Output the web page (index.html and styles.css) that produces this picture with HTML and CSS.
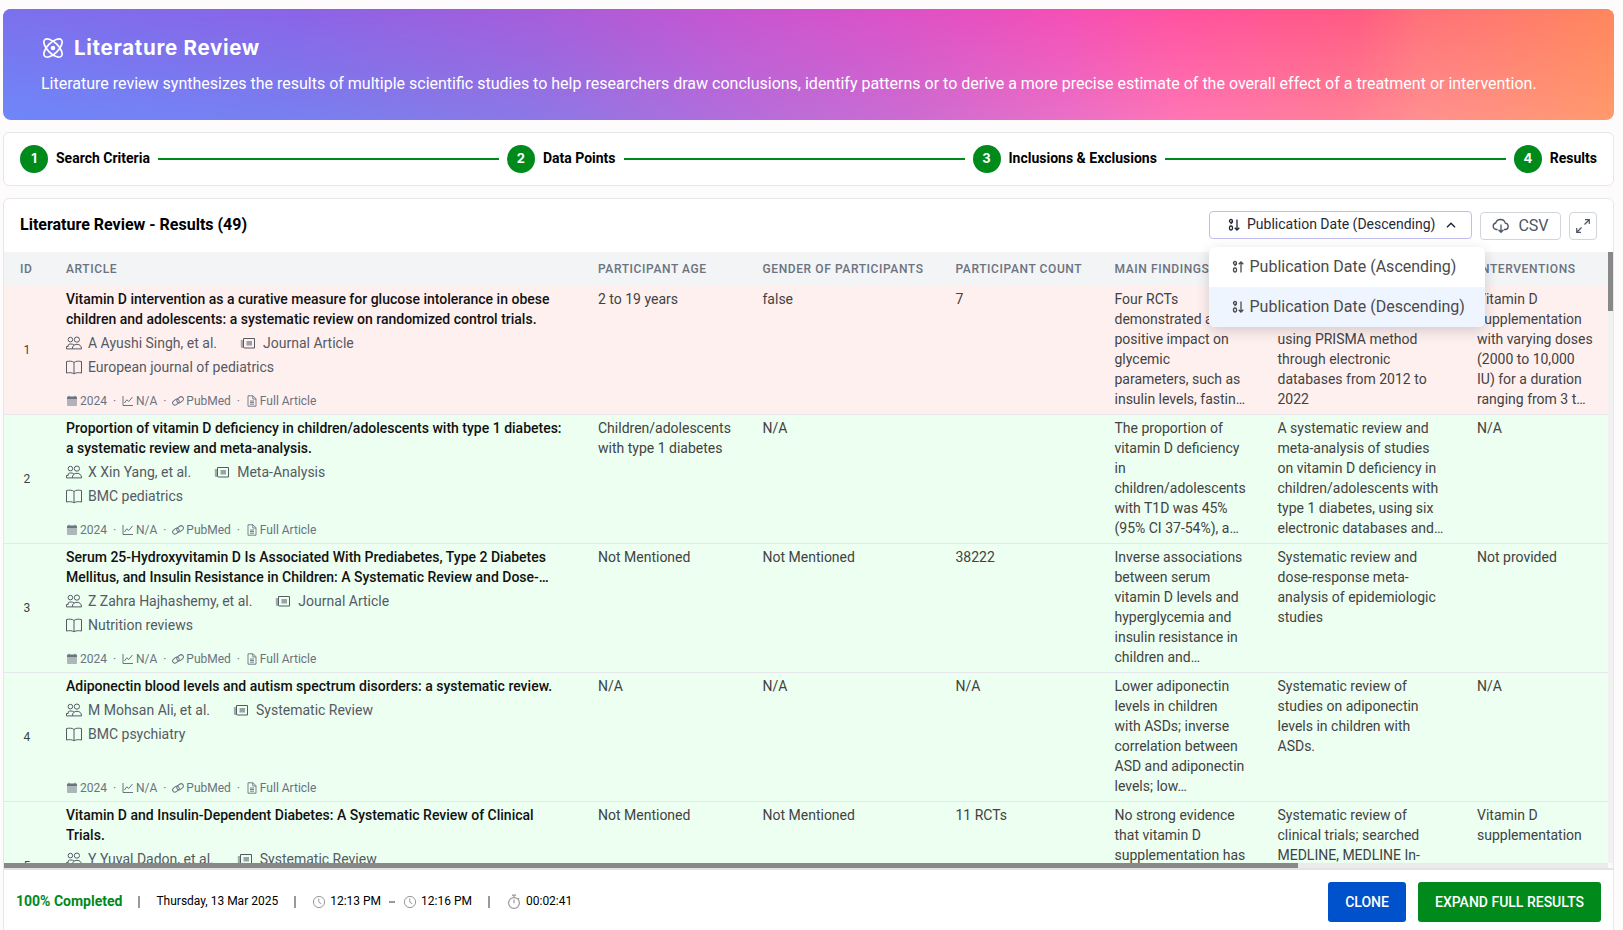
FILE: index.html
```
<!DOCTYPE html>
<html lang="en">
<head>
<meta charset="utf-8">
<title>Literature Review</title>
<link rel="stylesheet" href="styles.css">
</head>
<body>
<svg class="sprite" aria-hidden="true">
  <symbol id="people" viewBox="0 0 16 16"><g fill="none" stroke="currentColor"><circle cx="4.4" cy="4.6" r="2.3"/><circle cx="10.9" cy="4.6" r="2.6"/><path d="M6.3 13.9c0-3 2-4.600 4.700-4.600s4.500 1.600 4.500 4.600zM6.300 13.900H.5V11.500H2.200V9.800C3 9 4.200 8.800 6.500 9.200L8 10"/></g></symbol>
  <symbol id="news" viewBox="0 0 16 16"><path d="M.8 5h3v8H2.300C1.400 13 .8 12.400.8 11.500z" fill="currentColor" opacity=".5"/><path d="M3.500 3.500h11v9.500h-10a1 1 0 0 1-1-1z" fill="none" stroke="currentColor"/><path d="M6.500 6h5.500v4.500H6.500z" fill="currentColor" opacity=".55"/></symbol>
  <symbol id="book" viewBox="0 0 16 16"><path d="M8 3.500C6.500 1.900 3 2 .5 2.500v11.500c2.500-.6 6-.4 7.500.8 1.500-1.200 5-1.400 7.500-.8V2.500C13 2 9.500 1.900 8 3.500zm0 0v11" fill="none" stroke="currentColor"/></symbol>
  <symbol id="calendar" viewBox="0 0 12 12"><path d="M1 3.800h10V10a1 1 0 0 1-1 1H2a1 1 0 0 1-1-1z" fill="currentColor" opacity=".5"/><path d="M1 4V2.500a1 1 0 0 1 1-1h.5V.7h1v.8h5V.7h1v.8h.5a1 1 0 0 1 1 1V4z" fill="currentColor"/></symbol>
  <symbol id="chart" viewBox="0 0 12 12"><path d="M1 1v9.500h10M2.500 8l2.300-3.200 2 1.700L10.500 2" fill="none" stroke="currentColor"/></symbol>
  <symbol id="link" viewBox="0 0 12 12"><g fill="none" stroke="currentColor" stroke-width="1"><rect x=".4" y="4.800" width="7" height="4.600" rx="2.300" transform="rotate(-38 3.900 7.100)"/><rect x="4.600" y="2.500" width="7" height="4.600" rx="2.300" transform="rotate(-38 8.100 4.800)"/></g></symbol>
  <symbol id="file" viewBox="0 0 12 12"><path d="M2 .8h5L10 3.800v7.400H2zM6.800.8V4H10M4 6h4M4 7.500h4M4 9.200h4" fill="none" stroke="currentColor" stroke-width=".9"/></symbol>
  <symbol id="clock" viewBox="0 0 14 14"><g fill="none" stroke="currentColor"><circle cx="7" cy="7" r="5.600"/><path d="M6.800 3.500V7.200L9.300 8.800"/></g></symbol>
  <symbol id="stopwatch" viewBox="0 0 14 16"><g fill="none" stroke="currentColor" stroke-width="1.200"><circle cx="7" cy="9" r="5.400"/><path d="M7 5.500V9.300M5 1.200h4M7 1.200v2M11.200 4.200l1 1"/></g></symbol>
  <symbol id="desc" viewBox="0 0 12 14"><g fill="none" stroke="currentColor" stroke-width="1.300"><circle cx="3" cy="3" r="1.500"/><path d="M4.500 3c0 1.600-.6 2.600-2 3"/><rect x="1.500" y="8" width="3" height="4" rx="1.400"/><path d="M9 1.500v10.500M6.700 9.700L9 12l2.300-2.300"/></g></symbol>
  <symbol id="asc" viewBox="0 0 12 14"><g fill="none" stroke="currentColor" stroke-width="1.300"><circle cx="3" cy="3" r="1.500"/><path d="M4.500 3c0 1.600-.6 2.600-2 3"/><rect x="1.500" y="8" width="3" height="4" rx="1.400"/><path d="M9 12.500V2M6.700 4.300L9 2l2.300 2.300"/></g></symbol>
</svg>

<header class="banner">
  <div class="banner-head">
    <svg class="atom" viewBox="0 0 20 20"><g fill="none" stroke="currentColor" stroke-width="1.700"><ellipse cx="10" cy="10" rx="11.700" ry="5.400" transform="rotate(45 10 10)"/><ellipse cx="10" cy="10" rx="11.700" ry="5.400" transform="rotate(-45 10 10)"/></g><circle cx="10" cy="10" r="2.300" fill="currentColor"/></svg>
    <h1>Literature Review</h1>
  </div>
  <p>Literature review synthesizes the results of multiple scientific studies to help researchers draw conclusions, identify patterns or to derive a more precise estimate of the overall effect of a treatment or intervention.</p>
</header>

<nav class="stepper">
  <span class="num">1</span><span class="label">Search Criteria</span><i class="line"></i>
  <span class="num">2</span><span class="label">Data Points</span><i class="line"></i>
  <span class="num">3</span><span class="label">Inclusions &amp; Exclusions</span><i class="line"></i>
  <span class="num">4</span><span class="label">Results</span>
</nav>

<main class="card">
  <div class="toolbar">
    <h2>Literature Review - Results (49)</h2>
    <div class="select">
      <svg class="sort"><use href="#desc"/></svg><span>Publication Date (Descending)</span>
      <svg class="chev" viewBox="0 0 12 12"><path d="M2 8.200l4-4 4 4" fill="none" stroke="currentColor" stroke-width="1.500"/></svg>
      <div class="menu">
        <div class="option"><svg class="sort"><use href="#asc"/></svg>Publication Date (Ascending)</div>
        <div class="option active"><svg class="sort"><use href="#desc"/></svg>Publication Date (Descending)</div>
      </div>
    </div>
    <button class="csv"><svg viewBox="0 0 18 16"><path d="M5.500 11.500H4.300a3.300 3.300 0 0 1-.6-6.500A5 5 0 0 1 13.300 5.200a3.200 3.200 0 0 1 .4 6.300H12M9 6.500v7.800M6.500 11.800L9 14.300l2.500-2.500" fill="none" stroke="currentColor" stroke-width="1.300"/></svg>CSV</button>
    <button class="full"><svg viewBox="0 0 16 16"><path d="M9.500 6.500L14 2M10 1.700h4.300V6M6.500 9.500L2 14M1.700 10v4.300H6" fill="none" stroke="currentColor" stroke-width="1.200"/></svg></button>
  </div>

  <div class="viewport">
    <div class="table">
      <div class="row head"><span>ID</span><span>Article</span><span>Participant Age</span><span>Gender of Participants</span><span>Participant Count</span><span>Main Findings</span><span></span><span>Interventions</span></div>

      <div class="row red">
        <div class="id">1</div>
        <div class="article">
          <h3>Vitamin D intervention as a curative measure for glucose intolerance in obese<br>children and adolescents: a systematic review on randomized control trials.</h3>
          <div class="meta"><svg><use href="#people"/></svg><span>A Ayushi Singh, et al.</span><svg class="second"><use href="#news"/></svg><span>Journal Article</span></div>
          <div class="meta"><svg><use href="#book"/></svg><span>European journal of pediatrics</span></div>
          <div class="facts"><svg><use href="#calendar"/></svg><span>2024</span><b>·</b><svg><use href="#chart"/></svg><span>N/A</span><b>·</b><svg><use href="#link"/></svg><span>PubMed</span><b>·</b><svg><use href="#file"/></svg><span>Full Article</span></div>
        </div>
        <div>2 to 19 years</div><div>false</div><div>7</div>
        <div>Four RCTs<br>demonstrated a<br>positive impact on<br>glycemic<br>parameters, such as<br>insulin levels, fastin…</div>
        <div><br><br>using PRISMA method<br>through electronic<br>databases from 2012 to<br>2022</div>
        <div>Vitamin D<br>supplementation<br>with varying doses<br>(2000 to 10,000<br>IU) for a duration<br>ranging from 3 t…</div>
      </div>

      <div class="row">
        <div class="id">2</div>
        <div class="article">
          <h3>Proportion of vitamin D deficiency in children/adolescents with type 1 diabetes:<br>a systematic review and meta-analysis.</h3>
          <div class="meta"><svg><use href="#people"/></svg><span>X Xin Yang, et al.</span><svg class="second"><use href="#news"/></svg><span>Meta-Analysis</span></div>
          <div class="meta"><svg><use href="#book"/></svg><span>BMC pediatrics</span></div>
          <div class="facts"><svg><use href="#calendar"/></svg><span>2024</span><b>·</b><svg><use href="#chart"/></svg><span>N/A</span><b>·</b><svg><use href="#link"/></svg><span>PubMed</span><b>·</b><svg><use href="#file"/></svg><span>Full Article</span></div>
        </div>
        <div>Children/adolescents<br>with type 1 diabetes</div><div>N/A</div><div></div>
        <div>The proportion of<br>vitamin D deficiency<br>in<br>children/adolescents<br>with T1D was 45%<br>(95% CI 37-54%), a…</div>
        <div>A systematic review and<br>meta-analysis of studies<br>on vitamin D deficiency in<br>children/adolescents with<br>type 1 diabetes, using six<br>electronic databases and…</div>
        <div>N/A</div>
      </div>

      <div class="row">
        <div class="id">3</div>
        <div class="article">
          <h3>Serum 25-Hydroxyvitamin D Is Associated With Prediabetes, Type 2 Diabetes<br>Mellitus, and Insulin Resistance in Children: A Systematic Review and Dose-…</h3>
          <div class="meta"><svg><use href="#people"/></svg><span>Z Zahra Hajhashemy, et al.</span><svg class="second"><use href="#news"/></svg><span>Journal Article</span></div>
          <div class="meta"><svg><use href="#book"/></svg><span>Nutrition reviews</span></div>
          <div class="facts"><svg><use href="#calendar"/></svg><span>2024</span><b>·</b><svg><use href="#chart"/></svg><span>N/A</span><b>·</b><svg><use href="#link"/></svg><span>PubMed</span><b>·</b><svg><use href="#file"/></svg><span>Full Article</span></div>
        </div>
        <div>Not Mentioned</div><div>Not Mentioned</div><div>38222</div>
        <div>Inverse associations<br>between serum<br>vitamin D levels and<br>hyperglycemia and<br>insulin resistance in<br>children and…</div>
        <div>Systematic review and<br>dose-response meta-<br>analysis of epidemiologic<br>studies</div>
        <div>Not provided</div>
      </div>

      <div class="row">
        <div class="id">4</div>
        <div class="article">
          <h3>Adiponectin blood levels and autism spectrum disorders: a systematic review.</h3>
          <div class="meta"><svg><use href="#people"/></svg><span>M Mohsan Ali, et al.</span><svg class="second"><use href="#news"/></svg><span>Systematic Review</span></div>
          <div class="meta"><svg><use href="#book"/></svg><span>BMC psychiatry</span></div>
          <div class="facts"><svg><use href="#calendar"/></svg><span>2024</span><b>·</b><svg><use href="#chart"/></svg><span>N/A</span><b>·</b><svg><use href="#link"/></svg><span>PubMed</span><b>·</b><svg><use href="#file"/></svg><span>Full Article</span></div>
        </div>
        <div>N/A</div><div>N/A</div><div>N/A</div>
        <div>Lower adiponectin<br>levels in children<br>with ASDs; inverse<br>correlation between<br>ASD and adiponectin<br>levels; low…</div>
        <div>Systematic review of<br>studies on adiponectin<br>levels in children with<br>ASDs.</div>
        <div>N/A</div>
      </div>

      <div class="row">
        <div class="id">5</div>
        <div class="article">
          <h3>Vitamin D and Insulin-Dependent Diabetes: A Systematic Review of Clinical<br>Trials.</h3>
          <div class="meta"><svg><use href="#people"/></svg><span>Y Yuval Dadon, et al.</span><svg class="second"><use href="#news"/></svg><span>Systematic Review</span></div>
        </div>
        <div>Not Mentioned</div><div>Not Mentioned</div><div>11 RCTs</div>
        <div>No strong evidence<br>that vitamin D<br>supplementation has</div>
        <div>Systematic review of<br>clinical trials; searched<br>MEDLINE, MEDLINE In-</div>
        <div>Vitamin D<br>supplementation</div>
      </div>
    </div>
    <div class="vbar"><i></i></div>
    <div class="hbar"><i></i></div>
    <div class="corner"></div>
  </div>

  <footer class="foot">
    <strong>100% Completed</strong><i class="bar"></i>
    <span>Thursday, 13 Mar 2025</span><i class="bar"></i>
    <svg class="clk"><use href="#clock"/></svg><span>12:13 PM</span><i class="dash"></i>
    <svg class="clk"><use href="#clock"/></svg><span>12:16 PM</span><i class="bar"></i>
    <svg class="clk watch"><use href="#stopwatch"/></svg><span>00:02:41</span>
    <button class="btn clone">CLONE</button>
    <button class="btn expand">EXPAND FULL RESULTS</button>
  </footer>
</main>
</body>
</html>
```
FILE: styles.css
```
* { box-sizing: border-box; }
body {
  margin: 0;
  height: 930px;
  overflow: hidden;
  padding: 9px 9px 0 3px;
  display: flex;
  flex-direction: column;
  gap: 12px;
  background: #fdfbfb;
  font: 14px/20px Roboto, sans-serif;
  color: #000;
}
h1, h2, h3, p { margin: 0; }
button { font-family: inherit; margin: 0; padding: 0; }
svg { flex: none; display: block; }
.sprite { position: absolute; width: 0; height: 0; }

.banner {
  position: relative;
  isolation: isolate;
  flex: none;
  height: 111px;
  padding: 24px 38px;
  border-radius: 8px;
  overflow: hidden;
  color: #fff;
  background: linear-gradient(90deg, #6f87fa 0%, #7880f0 18%, #8c78e6 33%, #b36edc 45%, #cc6cd2 56%, #ea70c8 66%, #ff76b4 73%, #ff7f98 83%, #ff9090 88%, #ff9a6c 100%);
}
.banner::before {
  content: "";
  position: absolute;
  inset: 0;
  z-index: -1;
  background: linear-gradient(90deg, #7c70ec 0%, #8a64e6 18%, #a65dda 33%, #c656d1 45%, #dd51c6 56%, #f44fb5 66%, #ff529f 73%, #ff5a82 84%, #ff7078 88%, #ff865c 100%);
  mask-image: linear-gradient(#000, transparent);
}
.banner-head { display: flex; align-items: center; gap: 12px; height: 30px; }
.atom { width: 20px; height: 20px; margin-left: 2px; }
.banner h1 { font: 700 20.500px/30px Inter, sans-serif; letter-spacing: .7px; margin-left: -1px; }
.banner p { margin-top: 9px; font-size: 16px; line-height: 24px; white-space: nowrap; }

.stepper {
  flex: none;
  height: 54px;
  padding: 0 16px;
  display: flex;
  align-items: center;
  gap: 8px;
  background: #fff;
  border: 1px solid #e5e7eb;
  border-radius: 6px;
  font-weight: 700;
}
.label { margin-top: -2px; }
.num {
  width: 28px;
  height: 28px;
  border-radius: 50%;
  background: #008a1c;
  color: #fff;
  font: 700 13px/27px Inter, sans-serif;
  text-align: center;
}
.line { flex: 1; height: 2px; background: #008a1c; }

.card {
  flex: none;
  height: 760px;
  background: #fff;
  border: 1px solid #e5e7eb;
  border-radius: 6px 6px 0 0;
}
.toolbar { display: flex; align-items: center; height: 53px; padding: 1px 16px 0; }
.toolbar h2 { flex: 1; margin-top: -2px; font-size: 16px; line-height: 24px; font-weight: 700; }
.select {
  position: relative;
  width: 263px;
  height: 28px;
  margin: -3px 8px 0 0;
  padding-left: 18px;
  display: flex;
  align-items: center;
  border: 1px solid #c0bdf3;
  border-radius: 4px;
  color: #1f2937;
}
.sort { width: 12px; height: 14px; }
.select > span { margin: -2px 0 0 7px; }
.chev { width: 12px; height: 12px; margin-left: 9px; }
.menu {
  position: absolute;
  z-index: 2;
  top: 35px;
  left: -1px;
  width: 276px;
  background: #fff;
  border-radius: 6px;
  overflow: hidden;
  box-shadow: 0 4px 14px rgba(0, 0, 0, .16);
  font-size: 16px;
  color: #4a4a4a;
}
.option { height: 40px; padding-left: 22.500px; display: flex; align-items: center; gap: 6px; white-space: nowrap; }
.option.active { background: #eff5ff; }
.csv, .full {
  height: 28px;
  display: flex;
  align-items: center;
  justify-content: center;
  background: #fff;
  border: 1px solid #d1d5db;
  border-radius: 4px;
  color: #4b5563;
  font-size: 16px;
}
.csv { width: 81px; margin-right: 8px; gap: 8px; line-height: 22px; }
.csv svg { width: 18px; height: 16px; }
.full { width: 28px; }
.full svg { width: 16px; height: 16px; }

.viewport {
  display: grid;
  grid-template: 611px 5px / 1fr 5px;
  height: 616px;
}
.table { overflow: hidden; min-width: 0; }
.row {
  display: grid;
  grid-template-columns: 46px 532px 164.5px 193px 159px 163px 199.5px 1fr;
  height: 129px;
  background: #ecfff1;
  border-bottom: 1px solid #e5e7eb;
  color: #424242;
  white-space: nowrap;
}
.row > * { padding: 3px 0 3px 16px; }
.row.red { background: #fff0f0; }
.row.head {
  height: 34px;
  background: #f2f4f6;
  border: 0;
  color: #6b7280;
  font-size: 12px;
  font-weight: 500;
  line-height: 28px;
  letter-spacing: .6px;
  text-transform: uppercase;
}
.row .id { align-self: center; padding-left: 19.500px; font-size: 12px; }
.article { display: flex; flex-direction: column; }
.article h3 { font-size: 14px; line-height: 20px; font-weight: 500; color: #111; margin-bottom: 2px; }
.meta { display: flex; align-items: center; gap: 6px; height: 24px; color: #555a63; }
.meta svg { width: 16px; height: 16px; }
.meta .second { margin: 0 1px 0 17px; }
.facts { display: flex; align-items: center; height: 20px; margin-top: auto; font-size: 12px; color: #6b7280; }
.facts svg { width: 12px; height: 12px; margin-right: 2px; }
.facts b { width: 15px; text-align: center; font-weight: 400; }

.vbar { background: #f1f1f1; }
.vbar i { display: block; height: 59px; background: #888; }
.hbar { background: #ebebeb; }
.hbar i { display: block; width: 1294px; height: 5px; background: #888; }
.corner { background: #fafafa; }

.foot {
  display: flex;
  align-items: center;
  height: 65px;
  padding: 0 12px;
  border-top: 2px solid #e2e3e9;
  font-size: 12px;
}
.foot strong { font-size: 14px; font-weight: 700; color: #008a1c; }
.foot strong, .foot span { margin-top: -1px; }
.bar { width: 2px; height: 12px; margin: 0 16px; background: #999; }
.dash { width: 6px; height: 2px; margin: 0 8px; background: #999; }
.clk { width: 14px; height: 14px; margin-right: 4px; color: #999; }
.watch { height: 16px; margin: 0 5px 0 1px; }
.btn { height: 40px; border: 0; border-radius: 3px; color: #fff; font-size: 14px; font-weight: 500; }
.clone { width: 78px; margin-left: auto; background: #0052cc; }
.expand { width: 183px; margin-left: 12px; background: #008a1c; }
```
